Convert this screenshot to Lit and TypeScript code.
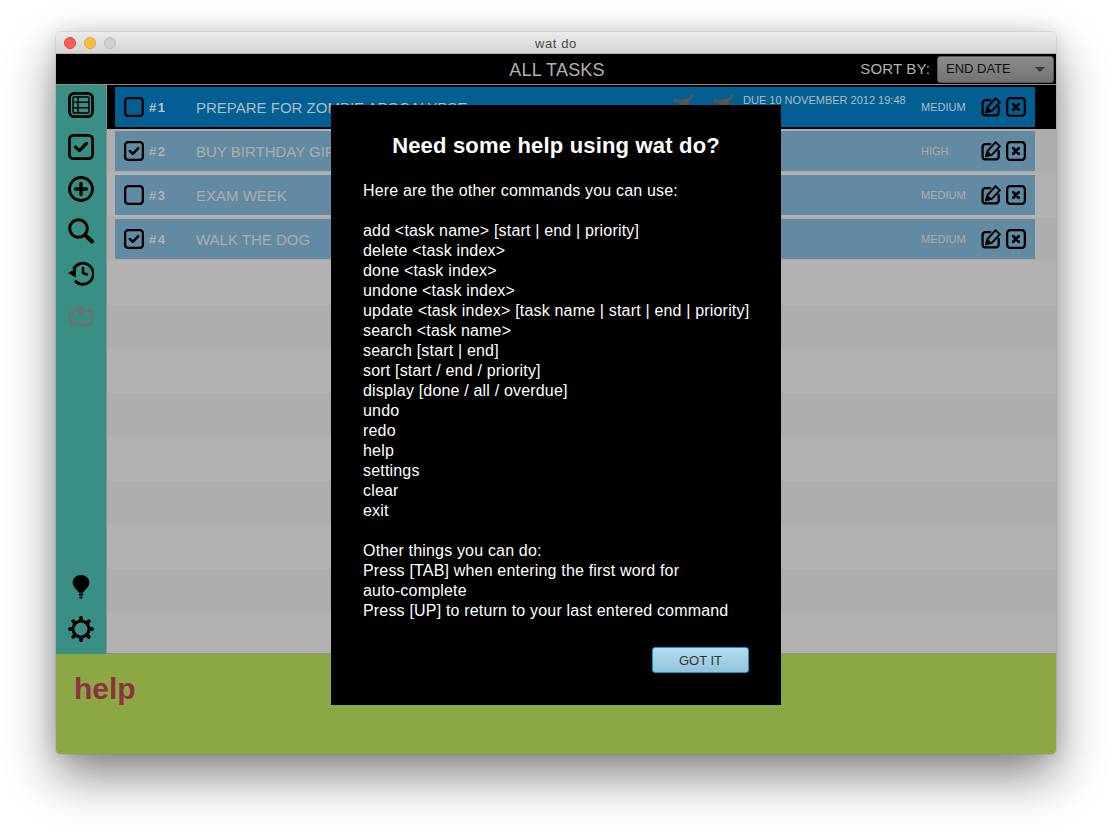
import { LitElement, html, css, svg } from "lit";
import { customElement } from "lit/decorators.js";

const ic = (body: unknown, cls = "") => html`<svg class="ic ${cls}" viewBox="0 0 26 26" fill="none" stroke="currentColor" stroke-width="2.8" stroke-linecap="round" stroke-linejoin="round">${body}</svg>`;

const icons = {
  list: svg`<rect x="1.4" y="1.4" width="23.200" height="23.200" rx="5"/><g stroke-width="1.400" stroke-linecap="butt"><rect x="5" y="5" width="16" height="16" rx="1"/><path d="M5 10.300h16M5 15.700h16M10 5v16"/></g>`,
  check: svg`<rect x="1.4" y="1.4" width="23.200" height="23.200" rx="4"/><path d="M7.500 13l4 3.600 7-7.200" stroke-width="3.200"/>`,
  box: svg`<rect x="1.500" y="1.500" width="23" height="23" rx="4"/>`,
  plus: svg`<circle cx="13" cy="13" r="11.500"/><path d="M13 7.500v11M7.500 13h11" stroke-width="3.400"/>`,
  search: svg`<circle cx="10.500" cy="10.500" r="8.800" stroke-width="3"/><path d="M17 17l7 6.500" stroke-width="4"/>`,
  history: svg`<path d="M5.500 9A10.500 10.500 0 1 1 7 20.700" stroke-width="2.800" stroke-linecap="butt"/><path d="M0 13l8-4.500v9z" fill="currentColor" stroke="none"/><path d="M15 8v5l4 1.500" stroke-width="2.500"/>`,
  repeat: svg`<path d="M10 8.500H6.500A4.500 4.500 0 0 0 2 13v5a4.500 4.500 0 0 0 4.500 4.500h13A4.500 4.500 0 0 0 24 18v-5a4.500 4.500 0 0 0-3.500-4.400" stroke-width="2.800"/><path d="M11 3l7.500 6-7.500 6z" fill="currentColor" stroke="none"/>`,
  bulb: svg`<path d="M13 1C8.300 1 4.700 4.300 4.700 8.700c0 3.800 4 6.800 6.300 10h4c2.300-3.200 6.300-6.200 6.300-10C21.300 4.300 17.700 1 13 1z" fill="currentColor" stroke="none"/><path d="M10.800 20.500h4.400M11.500 23.500h3" stroke-width="1.800" stroke-linecap="butt"/>`,
  gear: svg`<circle cx="13" cy="13" r="8" stroke-width="3"/><g stroke-width="3.800"><path d="M13 2v1.200M13 22.800V24M2 13h1.200M22.800 13H24M5.200 5.200l.9.900M19.900 19.900l.9.900M5.200 20.800l.9-.9M19.900 6.100l.9-.9"/></g>`,
  edit: svg`<path d="M12 4H6a4 4 0 0 0-4 4v12a4 4 0 0 0 4 4h13a4 4 0 0 0 4-4v-7" stroke-width="3"/><path d="M6.500 20l2-7L19 1.500l5.500 5.500L14 18z" stroke-width="2.600"/><path d="M6.500 20l2-7 5.500 5z" fill="currentColor" stroke="none"/>`,
  del: svg`<rect x="1.500" y="1.500" width="23" height="23" rx="4"/><path d="M9.500 9.500l7 7M16.500 9.500l-7 7" stroke-width="3.600"/>`,
};

const tasks = [
  { n: 1, name: "PREPARE FOR ZOMBIE APOCALYPSE", pr: "MEDIUM", done: false, sel: true },
  { n: 2, name: "BUY BIRTHDAY GIFT", pr: "HIGH", done: true, sel: false },
  { n: 3, name: "EXAM WEEK", pr: "MEDIUM", done: false, sel: false },
  { n: 4, name: "WALK THE DOG", pr: "MEDIUM", done: true, sel: false },
];

const HELP = `add <task name> [start | end | priority]
delete <task index>
done <task index>
undone <task index>
update <task index> [task name | start | end | priority]
search <task name>
search [start | end]
sort [start / end / priority]
display [done / all / overdue]
undo
redo
help
settings
clear
exit`;

const OTHER = `Other things you can do:
Press [TAB] when entering the first word for
auto-complete
Press [UP] to return to your last entered command`;

const clip = svg`<path d="M0 7.500c6 .8 12 1 15.500-.5 2-1 3.500-3 3.500-6" stroke-width="3"/><path d="M8 8h6l3.500 4.500h-12z" fill="currentColor" stroke="none"/>`;

@customElement("app-root")
export class AppRoot extends LitElement {
  static styles = css`
    :host { display: block; width: 1112px; height: 834px; box-sizing: border-box; padding: 32px 56px 80px; background: #fff; font-family: "Liberation Sans", Arial, sans-serif; overflow: hidden; }
    .window { position: relative; width: 1000px; height: 722px; border-radius: 5px 5px 4px 4px; display: flex; flex-direction: column; box-shadow: 0 0 0 1px rgba(0,0,0,.06), 0 22px 50px rgba(0,0,0,.48), 0 0 18px rgba(0,0,0,.12); }
    .title { height: 22px; flex: none; background: linear-gradient(#ebebeb, #d4d4d4); border-radius: 5px 5px 0 0; display: flex; align-items: center; position: relative; padding-left: 8px; gap: 8px; box-sizing: border-box; border-bottom: 1px solid #b5b5b5; }
    .dot { width: 12px; height: 12px; border-radius: 50%; box-sizing: border-box; }
    .r { background: #fc5b57; border: 1px solid #e2463f; }
    .y { background: #fdbc40; border: 1px solid #e0a33a; }
    .g { background: #cfcfcf; border: 1px solid #bdbdbd; }
    .title-text { flex: 1; text-align: center; font-size: 13px; letter-spacing: .6px; color: #4a4a4a; margin-left: -68px; padding-top: 1px; }
    .top { height: 31px; flex: none; box-sizing: border-box; background: #000; color: #b2b2b2; border-bottom: 1px solid #8c8c8c; display: grid; grid-template-columns: 1fr auto 1fr; align-items: center; }
    .top h1 { margin: 0; font-weight: normal; font-size: 18px; letter-spacing: .2px; color: #b0b0b0; position: relative; top: 1px; left: 1px; }
    .sort { justify-self: end; display: flex; align-items: center; gap: 7px; font-size: 15px; letter-spacing: .13px; padding-right: 2px; }
    .sort span.lbl { padding-bottom: 2px; }
    .select { width: 117px; height: 27px; box-sizing: border-box; border-radius: 3px; background: linear-gradient(#8d8d8d, #727272); border: 1px solid #555; color: #111; font-size: 13px; letter-spacing: 0; display: flex; align-items: center; justify-content: space-between; padding: 0 8px 2px; }
    .arrow { width: 0; height: 0; border: 5px solid transparent; border-top: 5px solid #3a3a3a; border-bottom: 0; margin-top: 2px; }
    .main { flex: 1; display: flex; min-height: 0; }
    .side { width: 51px; flex: none; box-sizing: border-box; background: #398f84; border-right: 1px solid #8d8d8d; display: flex; flex-direction: column; align-items: center; padding: 7px 0 12px; gap: 16px; color: #000; }
    .side .spacer { flex: 1; }
    .ic { width: 26px; height: 26px; display: block; flex: none; }
    .dim { color: #6f6f6f; }
    .list { flex: 1; display: flex; flex-direction: column; overflow: hidden; border-bottom: 1px solid #8d8d8d; }
    .row { height: 44px; flex: none; box-sizing: border-box; padding: 2px 21px 2px 8px; background: #b2b2b2; }
    .row.alt { background: #aeaeae; }
    .row.sel { background: #000; }
    .task { height: 40px; background: #638aa3; color: #adadad; display: grid; grid-template-columns: 34px 47px 1fr auto 60px 25px 29px; align-items: center; position: relative; }
    .sel .task { background: #025f93; color: #b1bcc4; }
    .cb { width: 20px; height: 20px; margin-left: 9px; color: #000; }
    .cb rect, .act rect { stroke-width: 3; }
    .num { font-size: 13px; font-weight: bold; letter-spacing: 1.600px; color: #b0b0b0; }
    .sel .num { color: #b8c4cb; }
    .name { font-size: 15px; white-space: nowrap; }
    .due { position: absolute; left: 628px; top: 7px; font-size: 11px; white-space: nowrap; }
    .clip { position: absolute; top: 6px; width: 22px; height: 14px; color: #555; }
    .pr { grid-column: 5; font-size: 11px; }
    .act { width: 20px; height: 20px; color: #000; }
    .footer { height: 100px; flex: none; background: #8ca845; color: #8d333f; font-weight: bold; font-size: 30px; padding: 15px 18px; box-sizing: border-box; border-radius: 0 0 4px 4px; line-height: 40px; }
    .modal { position: absolute; left: 275px; top: 73px; width: 450px; height: 600px; box-sizing: border-box; background: #000; color: #fff; padding: 27px 32px 0; display: flex; flex-direction: column; }
    .modal h2 { margin: 0 0 21px; font-size: 22px; letter-spacing: .18px; line-height: 28px; text-align: center; }
    .modal p { margin: 0 0 20px; font-size: 16px; letter-spacing: .18px; line-height: 20px; white-space: pre; }
    .got { align-self: flex-end; margin: 6px 0 0; width: 97px; height: 26px; box-sizing: border-box; border: 1.500px solid #0a9bd6; border-radius: 3px; background: linear-gradient(#b4dcef, #92c3dc); color: #333; font: 13px "Liberation Sans", Arial, sans-serif; padding: 0; }
  `;

  private row(t: (typeof tasks)[number]) {
    return html`<div class="row ${t.sel ? "sel" : ""} ${t.n % 2 === 0 ? "alt" : ""}">
      <div class="task">
        ${ic(t.done ? icons.check : icons.box, "cb")}
        <span class="num">#${t.n}</span>
        <span class="name">${t.name}</span>
        ${t.sel ? html`
          <svg class="clip" style="left:558px" viewBox="0 0 22 14" fill="none" stroke="currentColor">${clip}</svg>
          <svg class="clip" style="left:598px" viewBox="0 0 22 14" fill="none" stroke="currentColor">${clip}</svg>
          <span class="due">DUE 10 NOVEMBER 2012 19:48</span>` : ""}
        <span class="pr">${t.pr}</span>
        ${ic(icons.edit, "act")}
        ${ic(icons.del, "act")}
      </div>
    </div>`;
  }

  render() {
    const blanks = Array.from({ length: 9 }, (_, i) => i);
    return html`<div class="window">
      <div class="title"><span class="dot r"></span><span class="dot y"></span><span class="dot g"></span><span class="title-text">wat do</span></div>
      <div class="top"><span></span><h1>ALL TASKS</h1>
        <div class="sort"><span class="lbl">SORT BY:</span> <div class="select">END DATE<span class="arrow"></span></div></div>
      </div>
      <div class="main">
        <nav class="side">
          ${ic(icons.list)}${ic(icons.check)}${ic(icons.plus)}${ic(icons.search)}${ic(icons.history)}${ic(icons.repeat, "dim")}
          <span class="spacer"></span>
          ${ic(icons.bulb)}${ic(icons.gear)}
        </nav>
        <div class="list">
          ${tasks.map((t) => this.row(t))}
          ${blanks.map((i) => html`<div class="row ${i % 2 === 0 ? "" : "alt"}"></div>`)}
        </div>
      </div>
      <div class="footer">help</div>
      <div class="modal">
        <h2>Need some help using wat do?</h2>
        <p>Here are the other commands you can use:</p>
        <p>${HELP}</p>
        <p>${OTHER}</p>
        <button class="got">GOT IT</button>
      </div>
    </div>`;
  }
}
